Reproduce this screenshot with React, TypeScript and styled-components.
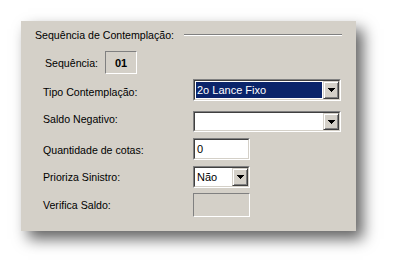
import React from 'react';
import styled, { createGlobalStyle } from 'styled-components';

const GlobalStyle = createGlobalStyle`
  html, body {
    margin: 0;
    padding: 0;
    background: #ffffff;
  }
  body {
    font-family: "Liberation Sans", Arial, sans-serif;
    font-size: 11px;
    color: #000000;
  }
`;

const Page = styled.div`
  width: 398px;
  height: 273px;
  padding: 21px 0 0 21px;
  box-sizing: border-box;
`;

const Panel = styled.div`
  width: 335px;
  height: 210px;
  background: #d4d0c8;
  box-shadow: 7px 8px 14px rgba(0, 0, 0, 0.62);
  box-sizing: border-box;
  padding: 8px 14px 0 14px;
`;

const GroupHeader = styled.div`
  display: flex;
  align-items: center;
  height: 12px;
  gap: 10px;
`;

const GroupTitle = styled.span`
  white-space: nowrap;
  font-size: 10.6px;
`;

const EtchedLine = styled.div`
  flex: 1;
  height: 0;
  border-top: 1px solid #808080;
  border-bottom: 1px solid #ffffff;
`;

const Row = styled.div<{ $top: number; $height: number; $indent: number }>`
  display: flex;
  align-items: center;
  margin-top: ${p => p.$top}px;
  height: ${p => p.$height}px;
  padding-left: ${p => p.$indent}px;
`;

const Label = styled.span<{ $width: number; $shift?: number }>`
  width: ${p => p.$width}px;
  flex: none;
  font-size: 10.6px;
  white-space: nowrap;
  position: relative;
  top: ${p => p.$shift ?? 0}px;
`;

const StaticBox = styled.div`
  width: 32px;
  height: 23px;
  box-sizing: border-box;
  border-top: 1px solid #808080;
  border-left: 1px solid #808080;
  border-bottom: 1px solid #ffffff;
  border-right: 1px solid #ffffff;
  display: flex;
  align-items: center;
  justify-content: center;
  font-weight: bold;
  font-size: 11px;
`;

const Sunken = styled.div<{ $width: number }>`
  width: ${p => p.$width}px;
  height: 100%;
  box-sizing: border-box;
  border-top: 1px solid #808080;
  border-left: 1px solid #808080;
  border-bottom: 1px solid #ffffff;
  border-right: 1px solid #ffffff;
  display: flex;
`;

const Inner = styled.div`
  flex: 1;
  display: flex;
  align-items: center;
  box-sizing: border-box;
  border-top: 1px solid #404040;
  border-left: 1px solid #404040;
  border-bottom: 1px solid #d4d0c8;
  border-right: 1px solid #d4d0c8;
  background: #ffffff;
  min-width: 0;
`;

const Value = styled.div<{ $selected?: boolean }>`
  flex: 1;
  align-self: stretch;
  display: flex;
  align-items: center;
  margin: 1px;
  padding-left: 1px;
  font-size: 11px;
  background: ${p => (p.$selected ? '#0a246a' : 'transparent')};
  color: ${p => (p.$selected ? '#ffffff' : '#000000')};
  white-space: nowrap;
  overflow: hidden;
`;

const DropButton = styled.div`
  width: 16px;
  align-self: stretch;
  flex: none;
  box-sizing: border-box;
  background: #d4d0c8;
  border-top: 1px solid #d4d0c8;
  border-left: 1px solid #d4d0c8;
  border-bottom: 1px solid #404040;
  border-right: 1px solid #404040;
  box-shadow: inset 1px 1px 0 #ffffff, inset -1px -1px 0 #808080;
  display: flex;
  align-items: center;
  justify-content: center;
`;

const DisabledBox = styled.div<{ $width: number }>`
  width: ${p => p.$width}px;
  height: 100%;
  box-sizing: border-box;
  border-top: 1px solid #808080;
  border-left: 1px solid #808080;
  border-bottom: 1px solid #ffffff;
  border-right: 1px solid #ffffff;
`;

const Arrow = () => (
  <svg width="7" height="4" viewBox="0 0 7 4">
    <path d="M0 0h7v1H0zM1 1h5v1H1zM2 2h3v1H2zM3 3h1v1H3z" fill="#000" />
  </svg>
);

const Combo = ({ width, value, selected }: { width: number; value?: string; selected?: boolean }) => (
  <Sunken $width={width}>
    <Inner>
      <Value $selected={selected}>{value}</Value>
      <DropButton>
        <Arrow />
      </DropButton>
    </Inner>
  </Sunken>
);

const TextInput = ({ width, value }: { width: number; value?: string }) => (
  <Sunken $width={width}>
    <Inner>
      <Value>{value}</Value>
    </Inner>
  </Sunken>
);

export default function App() {
  return (
    <>
      <GlobalStyle />
      <Page>
        <Panel>
          <GroupHeader>
            <GroupTitle>Sequência de Contemplação:</GroupTitle>
            <EtchedLine />
          </GroupHeader>
          <Row $top={10} $height={23} $indent={10}>
            <Label $width={60}>Sequência:</Label>
            <StaticBox>01</StaticBox>
          </Row>
          <Row $top={5} $height={22} $indent={8}>
            <Label $width={150} $shift={2}>Tipo Contemplação:</Label>
            <Combo width={148} value="2o Lance Fixo" selected />
          </Row>
          <Row $top={10} $height={21} $indent={8}>
            <Label $width={150} $shift={-3}>Saldo Negativo:</Label>
            <Combo width={148} />
          </Row>
          <Row $top={6} $height={22} $indent={8}>
            <Label $width={150} $shift={1}>Quantidade de cotas:</Label>
            <TextInput width={57} value="0" />
          </Row>
          <Row $top={6} $height={22} $indent={8}>
            <Label $width={150}>Prioriza Sinistro:</Label>
            <Combo width={57} value="Não" />
          </Row>
          <Row $top={5} $height={24} $indent={8}>
            <Label $width={150}>Verifica Saldo:</Label>
            <DisabledBox $width={57} />
          </Row>
        </Panel>
      </Page>
    </>
  );
}
